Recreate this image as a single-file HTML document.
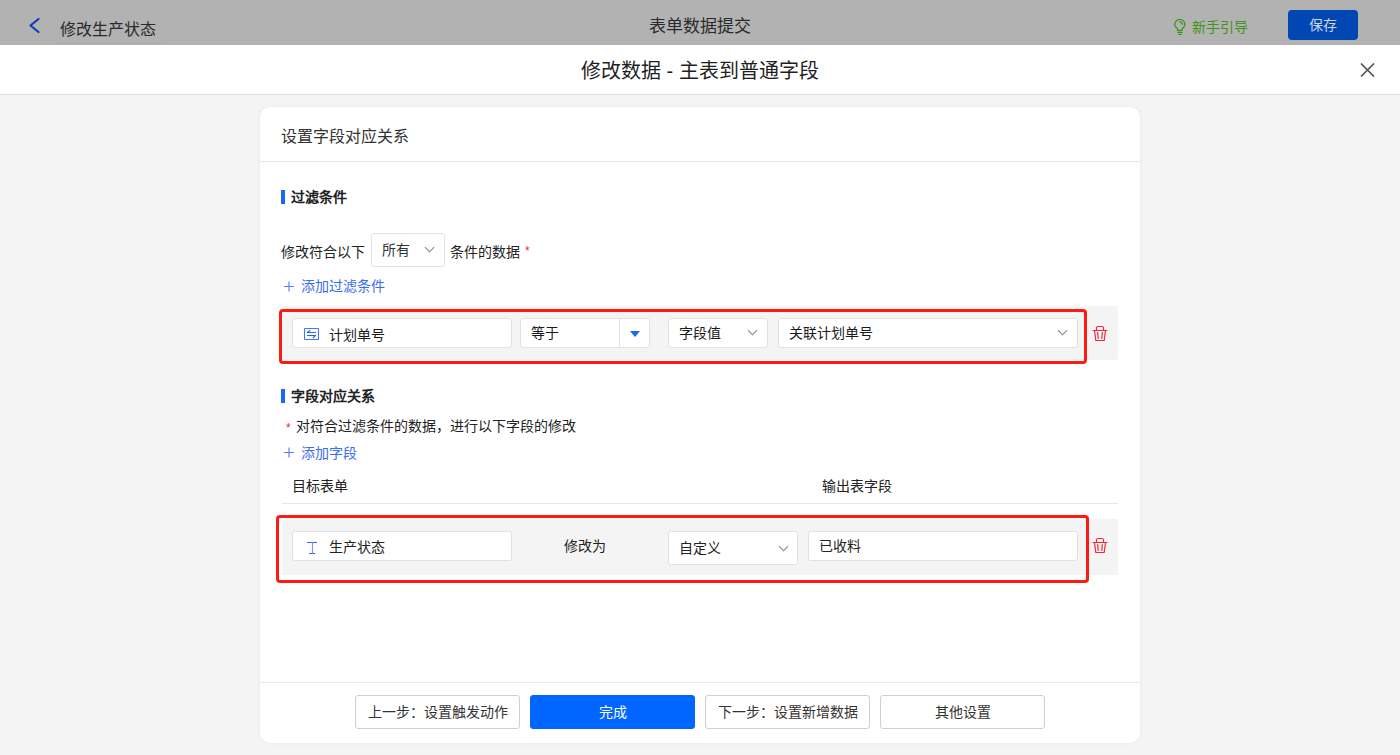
<!DOCTYPE html>
<html lang="zh-CN"><head><meta charset="utf-8">
<style>
*{box-sizing:border-box;margin:0;padding:0}
html,body{width:1400px;height:755px;overflow:hidden;background:#f4f4f4;font-family:"Liberation Sans",sans-serif;color:#333}
.abs{position:absolute}
#top{left:0;top:0;width:1400px;height:45px;background:#b2b2b2}
#mh{left:0;top:45px;width:1400px;height:50px;background:#fff;border-bottom:1px solid #dedede}
#card{left:260px;top:107px;width:880px;height:636px;background:#fff;border-radius:10px;box-shadow:0 0 4px rgba(0,0,0,0.05)}
.t{position:absolute;white-space:nowrap;line-height:1}
.box{position:absolute;background:#fff;border:1px solid #e2e2e2;border-radius:3px}
.row{position:absolute;background:#f4f4f4}
.red{position:absolute;border:3px solid #fc1a12;border-radius:4px}
.chev{position:absolute;width:7px;height:7px;border-right:1.2px solid #8a8a8a;border-bottom:1.2px solid #8a8a8a;transform:rotate(45deg)}
.btn{position:absolute;top:695px;height:34px;width:165px;border:1px solid #cfcfcf;border-radius:3px;background:#fff;font-size:14px;color:#333;text-align:center;line-height:32px}
</style></head><body>
<div id="top" class="abs">
  <svg class="abs" style="left:28px;top:17px" width="13" height="17" viewBox="0 0 13 17"><path d="M10.5 2 L2.5 8.5 L10.5 15" fill="none" stroke="#0b3cbf" stroke-width="2.2" stroke-linecap="round" stroke-linejoin="round"/></svg>
  <div class="t" style="left:60px;top:22px;font-size:16px;color:#2a2a2a">修改生产状态</div>
  <div class="abs" style="left:58px;top:43px;width:104px;border-top:1px dashed #a8a8a8"></div>
  <div class="t" style="left:649px;top:18px;font-size:17px;color:#2a2a2a">表单数据提交</div>
  <svg class="abs" style="left:1172px;top:17px" width="16" height="19" viewBox="0 0 16 19"><path d="M5.6 13.4 L5.6 12 C4.2 10.8 2.65 9.6 2.65 7.6 A5.15 5.15 0 0 1 12.95 7.6 C12.95 9.6 11.4 10.8 10 12 L10 13.4 Z M5.7 15.4 L10 15.4 M6.7 17.3 L9.3 17.3 M7.6 4.6 Q9.8 5.1 10.4 7.2" fill="none" stroke="#3f961c" stroke-width="1.3" stroke-linecap="round"/></svg>
  <div class="t" style="left:1192px;top:20px;font-size:14px;color:#3f941c">新手引导</div>
  <div class="abs" style="left:1288px;top:10px;width:70px;height:30px;background:#0047b3;border-radius:4px"></div>
  <div class="t" style="left:1309px;top:18px;font-size:14px;color:#cdd5e6">保存</div>
</div>
<div id="mh" class="abs">
  <div class="t" style="left:581px;top:16px;font-size:20px;color:#1f1f1f">修改数据 - 主表到普通字段</div>
  <svg class="abs" style="left:1360px;top:18px" width="15" height="14" viewBox="0 0 15 14"><path d="M1 0.5 L14 13.5 M14 0.5 L1 13.5" stroke="#505050" stroke-width="1.6"/></svg>
</div>
<div id="card" class="abs"></div>
<div class="t" style="left:281px;top:129px;font-size:16px;color:#333">设置字段对应关系</div>
<div class="abs" style="left:260px;top:161px;width:880px;height:1px;background:#e8e8e8"></div>

<div class="abs" style="left:281px;top:190px;width:4px;height:14px;background:#1a66ff"></div>
<div class="t" style="left:291px;top:190px;font-size:14px;font-weight:bold;color:#222">过滤条件</div>

<div class="t" style="left:281px;top:245px;font-size:14px;color:#222">修改符合以下</div>
<div class="box" style="left:371px;top:233px;width:74px;height:34px"></div>
<div class="t" style="left:382px;top:243px;font-size:14px;color:#333">所有</div>
<div class="chev" style="left:426px;top:244px"></div>
<div class="t" style="left:450px;top:245px;font-size:14px;color:#222">条件的数据</div>
<div class="t" style="left:525px;top:245px;font-size:12px;color:#f5222d">*</div>
<svg class="abs" style="left:283px;top:281px" width="12" height="12" viewBox="0 0 12 12"><path d="M1 5.5 L11 5.5 M6 0.5 L6 10.5" stroke="#5a7cf2" stroke-width="1.1"/></svg>
<div class="t" style="left:301px;top:279px;font-size:14px;color:#3a6cf0">添加过滤条件</div>

<div class="row" style="left:282px;top:306px;width:836px;height:54px;border-radius:2px"></div>
<div class="red" style="left:279px;top:309px;width:808px;height:55px"></div>
<div class="box" style="left:292px;top:318px;width:220px;height:30px"></div>
<svg class="abs" style="left:303px;top:327px" width="17" height="15" viewBox="0 0 17 15"><rect x="1.5" y="1.5" width="14" height="11" rx="0.5" fill="none" stroke="#3f78ff" stroke-width="1.1"/><path d="M4.5 5.5 L12.5 5.5 M4.5 5.5 L6.8 3.4 M4.5 8.5 L12.5 8.5 M12.5 8.5 L10.2 10.6" fill="none" stroke="#1f63ff" stroke-width="1.2" stroke-linecap="round"/></svg>
<div class="t" style="left:329px;top:328px;font-size:14px;color:#1a1a1a">计划单号</div>
<div class="box" style="left:520px;top:318px;width:130px;height:30px"></div>
<div class="abs" style="left:619px;top:319px;width:1px;height:28px;background:#e2e2e2"></div>
<div class="abs" style="left:630px;top:331px;width:0;height:0;border-left:5px solid transparent;border-right:5px solid transparent;border-top:6px solid #1a66ff"></div>
<div class="t" style="left:531px;top:326px;font-size:14px;color:#1a1a1a">等于</div>
<div class="box" style="left:668px;top:318px;width:100px;height:30px"></div>
<div class="t" style="left:679px;top:326px;font-size:14px;color:#1a1a1a">字段值</div>
<div class="chev" style="left:749px;top:327px"></div>
<div class="box" style="left:778px;top:318px;width:300px;height:30px"></div>
<div class="t" style="left:789px;top:326px;font-size:14px;color:#1a1a1a">关联计划单号</div>
<div class="chev" style="left:1059px;top:327px"></div>
<svg class="abs" style="left:1092px;top:325px" width="16" height="17" viewBox="0 0 16 17"><path d="M4.5 5.4 L4.5 3 Q4.5 1.5 6 1.5 L10 1.5 Q11.5 1.5 11.5 3 L11.5 5.4 M1 5.5 L15 5.5 M2.5 5.5 L3.8 15.5 L12.2 15.5 L13.5 5.5 M5.7 7.5 L6.2 13.5 M10.3 7.5 L9.8 13.5" fill="none" stroke="#f2263a" stroke-width="1.2" stroke-linecap="round" stroke-linejoin="round"/></svg>

<div class="abs" style="left:281px;top:389px;width:4px;height:14px;background:#1a66ff"></div>
<div class="t" style="left:291px;top:389px;font-size:14px;font-weight:bold;color:#222">字段对应关系</div>
<div class="t" style="left:286px;top:422px;font-size:12px;color:#f5222d">*</div>
<div class="t" style="left:296px;top:419px;font-size:14px;color:#222">对符合过滤条件的数据，进行以下字段的修改</div>
<svg class="abs" style="left:283px;top:447px" width="12" height="12" viewBox="0 0 12 12"><path d="M1 5.5 L11 5.5 M6 0.5 L6 10.5" stroke="#5a7cf2" stroke-width="1.1"/></svg>
<div class="t" style="left:301px;top:446px;font-size:14px;color:#3a6cf0">添加字段</div>
<div class="t" style="left:292px;top:479px;font-size:14px;color:#222">目标表单</div>
<div class="t" style="left:822px;top:479px;font-size:14px;color:#222">输出表字段</div>
<div class="abs" style="left:282px;top:503px;width:836px;height:1px;background:#e6e6e6"></div>

<div class="row" style="left:282px;top:519px;width:836px;height:56px;border-radius:2px"></div>
<div class="red" style="left:276px;top:515px;width:813px;height:68px"></div>
<div class="box" style="left:292px;top:531px;width:220px;height:30px"></div>
<svg class="abs" style="left:304px;top:540px" width="16" height="16" viewBox="0 0 16 16"><path d="M3 2.5 L13 2.5 M5 13.5 L11 13.5" fill="none" stroke="#2f6bff" stroke-width="1.1"/><path d="M8.5 2.5 L8.5 13.5" fill="none" stroke="#8a8cff" stroke-width="1.1"/></svg>
<div class="t" style="left:329px;top:540px;font-size:14px;color:#222">生产状态</div>
<div class="t" style="left:564px;top:539px;font-size:14px;color:#222">修改为</div>
<div class="box" style="left:668px;top:531px;width:130px;height:34px"></div>
<div class="t" style="left:679px;top:541px;font-size:14px;color:#222">自定义</div>
<div class="chev" style="left:780px;top:543px"></div>
<div class="box" style="left:808px;top:531px;width:270px;height:30px"></div>
<div class="t" style="left:819px;top:539px;font-size:14px;color:#222">已收料</div>
<svg class="abs" style="left:1092px;top:537px" width="16" height="17" viewBox="0 0 16 17"><path d="M4.5 5.4 L4.5 3 Q4.5 1.5 6 1.5 L10 1.5 Q11.5 1.5 11.5 3 L11.5 5.4 M1 5.5 L15 5.5 M2.5 5.5 L3.8 15.5 L12.2 15.5 L13.5 5.5 M5.7 7.5 L6.2 13.5 M10.3 7.5 L9.8 13.5" fill="none" stroke="#f2263a" stroke-width="1.2" stroke-linecap="round" stroke-linejoin="round"/></svg>

<div class="abs" style="left:260px;top:682px;width:880px;height:1px;background:#e8e8e8"></div>
<div class="btn" style="left:355px">上一步：设置触发动作</div>
<div class="btn" style="left:530px;background:#0066ff;border-color:#0066ff;color:#fff">完成</div>
<div class="btn" style="left:705px">下一步：设置新增数据</div>
<div class="btn" style="left:880px">其他设置</div>
</body></html>
